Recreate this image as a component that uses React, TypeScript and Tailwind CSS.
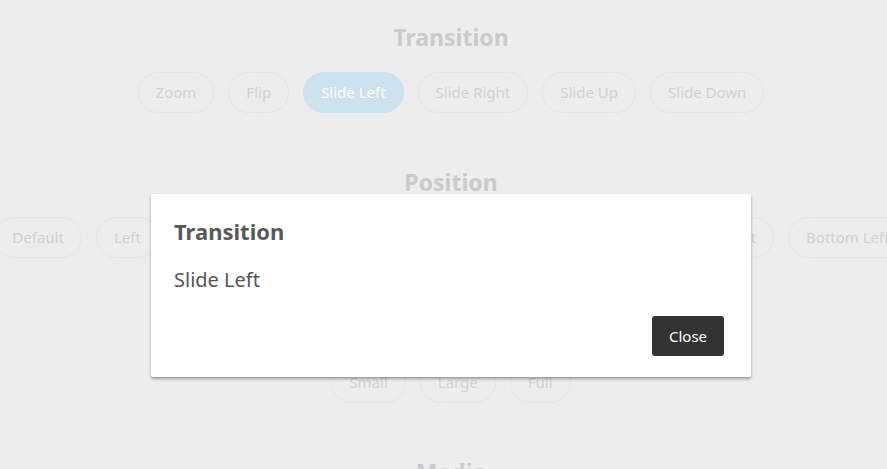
import React from "react";

const transitions = ["Zoom", "Flip", "Slide Left", "Slide Right", "Slide Up", "Slide Down"];
const positions = ["Default", "Left", "Right", "Top", "Bottom", "Top Center", "Top Left", "Top Right", "Bottom Left"];
const sizes = ["Small", "Large", "Full"];

const Pill = ({ label, active }: { label: string; active?: boolean }) => (
  <button
    className={
      active
        ? "shrink-0 h-[41px] px-[17px] rounded-full bg-[#cce2ee] text-white text-[15px] border border-[#cce2ee] whitespace-nowrap"
        : "shrink-0 h-[41px] px-[17px] rounded-full border border-[#e5e5e5] text-[#d2d2d2] text-[15px] whitespace-nowrap"
    }
  >
    {label}
  </button>
);

const Section = ({ title, items, active }: { title: string; items: string[]; active?: string }) => (
  <section className="flex flex-col items-center">
    <h2 className="h-[35px] text-[23px] font-bold text-[#cbcbcb] leading-[35px]">{title}</h2>
    <div className="mt-[17px] flex w-full justify-center gap-[14px]">
      {items.map((i) => (
        <Pill key={i} label={i} active={i === active} />
      ))}
    </div>
  </section>
);

export default function App() {
  return (
    <div
      className="relative h-[469px] w-[887px] overflow-hidden bg-[#ededed]"
      style={{ fontFamily: '"Noto Sans", "Open Sans", sans-serif' }}
    >
      <div className="flex flex-col gap-[52px] pt-[20px] pl-[15px]">
        <Section title="Transition" items={transitions} active="Slide Left" />
        <Section title="Position" items={positions} />
        <Section title="Size" items={sizes} />
        <Section title="Media" items={[]} />
      </div>

      <div className="absolute left-[151px] top-[194px] w-[600px] h-[183px] bg-white rounded-[2px] shadow-[0_2px_3px_rgba(0,0,0,0.35)] px-[23px] pt-[22px]">
        <h3 className="text-[22px] font-bold text-[#595959] leading-[30px]">Transition</h3>
        <p className="mt-[21px] text-[20px] text-[#555] leading-[26px]">Slide Left</p>
        <div className="mt-[23px] flex justify-end pr-[4px]">
          <button className="h-[40px] w-[72px] rounded-[3px] bg-[#333] text-white text-[15px]">Close</button>
        </div>
      </div>
    </div>
  );
}
